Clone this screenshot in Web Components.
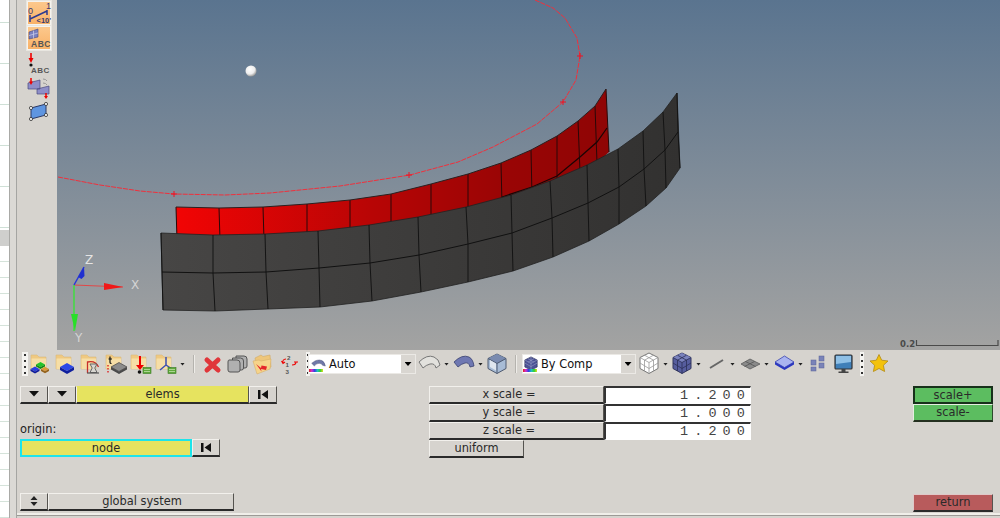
<!DOCTYPE html>
<html>
<head>
<meta charset="utf-8">
<style>
  html, body { margin: 0; padding: 0; height: 100%; overflow: hidden; background: #d6d3ce; }
  body { font: 11.4px "DejaVu Sans", sans-serif; color: #222; }
</style>
</head>
<body>
<hm-app></hm-app>

<script>
// folder shared by most of the toolbar icons
const FOLDER = `<path d="M1 3h6l2 2h7v12H1z" fill="#efc981" stroke="#d8b97e" stroke-width=".6"/><path d="M1.500 6.500H16V17H1.500z" fill="#f6dea6"/>`;
const TAG = `<rect x="13" y="15.500" width="8" height="6" fill="#5fa83c" stroke="#3a7a22" stroke-width=".6"/><path d="M14 17.500h6M14 19.500h6" stroke="#cde6b8" stroke-width=".7"/>`;

const ICONS = {
  blocks: `${FOLDER}<path d="M6 12.500l4.500-2.500 4.500 2.500-4.500 2.500z" fill="#22c42a"/><path d="M6 12.500v2l4.500 2.500 4.500-2.500v-2l-4.500 2.500z" fill="#0f8a18"/>
    <path d="M.5 17l4.500-2.500L9.500 17 5 19.500z" fill="#2a3fe0"/><path d="M.5 17v2L5 21.500 9.500 19v-2L5 19.500z" fill="#101c9a"/>
    <path d="M11 17l4-2.300 4 2.300-4 2.300z" fill="#d99a3a"/><path d="M11 17v2l4 2.300 4-2.300v-2l-4 2.300z" fill="#94621c"/>`,
  slab: `${FOLDER}<path d="M5 15l7-4 7 4-7 4z" fill="#2c49e8"/><path d="M5 15v3l7 4 7-4v-3l-7 4z" fill="#101f9e"/>`,
  arc: `${FOLDER}<path d="M7.500 21V10q8-2 11 5" fill="none" stroke="#c8302a" stroke-width="1.300"/>
    <path d="M10 12h7l-2.200 4 2.200 4.500h-7l2.200-4.500z" fill="#d8d6d0" stroke="#666" stroke-width="1"/><path d="M7 21h12" stroke="#555" stroke-width="1.200"/>`,
  tslab: `${FOLDER}<path d="M3.500 7h3.500M5 4.500v6q0 1 1.500 1" fill="none" stroke="#111" stroke-width="1.200"/><path d="M3 13v1.500M3 16v1.500M3 19v1.500" stroke="#d22" stroke-width="1.400"/>
    <path d="M6 15l8-4.500 8 4.500-8 4.500z" fill="#8c8c8c" stroke="#444" stroke-width=".7"/><path d="M6 15v2.500l8 4.500 8-4.500V15l-8 4.500z" fill="#4a4a4a"/>`,
  down: `${FOLDER}<path d="M10 4v10" stroke="#e00" stroke-width="2"/><path d="M6 13h8l-4 5z" fill="#e00"/><circle cx="9.500" cy="20" r="1.800" fill="#111"/>${TAG}`,
  axes: `${FOLDER}<path d="M11 5v8l-6 5M11 13l6 4" fill="none" stroke="#3d4fb0" stroke-width="1.500"/>${TAG}`,
  cross: `<path d="M3 8l11 10M14 8L3 18" stroke="#e0363a" stroke-width="5" stroke-linecap="round"/>`,
  stack: `<g fill="#b0b0b0" stroke="#555" stroke-width="1" transform="translate(0 1)"><path d="M9 3h8q3 0 3 3v7q0 2-2 2h-9z"/><path d="M5.500 5h8q3 0 3 3v7q0 2-2 2h-9z"/><path d="M2 7h8q3 0 3 3v7q0 2-2 2H3q-2 0-2-2v-8q0-2 1-2z"/></g>`,
  folderback: `<path d="M3 6l6-3 2 1.500 7-1.500 1 12-14 4z" fill="#eec67a" stroke="#cfa968" stroke-width=".6"/><path d="M1 9l6-1 2 1 10-2-1 10-13 5z" fill="#f6d48a" stroke="#d6b06c" stroke-width=".6"/><path d="M4 12l5 4 .5-2.500 5.500 1-1 3.500-5-1 .5 2.500z" fill="#e5262a"/>`,
  renum: `<g font-family="Liberation Sans, sans-serif" font-weight="700" font-size="6.200" fill="#555"><text x="7" y="8">2</text><text x="5.500" y="15.200">1</text><text x="5.500" y="22.400">3</text></g>
    <path d="M6 7Q2 7.500 3 11M1.500 9l1.500 2.500L5 10M12 13q4 0 4-3M14 10h4" stroke="#e00" stroke-width="1.100" fill="none"/>`,
  surfauto: `<path d="M1 8q8-7 15-4 4 2 5 8l-4-1q-1-3-5-3-5 0-7 4z" fill="#6f78a8" stroke="#3f466e" stroke-width=".6"/>`,
  surfwire: `<path d="M1 10q8-8 15-5 5 2 6 8l-4 3q-1-5-6-4-4 1-7 4z" fill="#e2e1dd" stroke="#777" stroke-width="1"/>`,
  surfsolid: `<path d="M1 10q8-8 15-5 4 2 5 9l-4 1q-1-5-5-4-4 1-7 4z" fill="#6f78b2" stroke="#384070" stroke-width=".8"/>`,
  box: `<path d="M10 2l9 4.500v10l-9 5-9-5v-10z" fill="#a8bcd6" stroke="#4e5a70" stroke-width="1"/><path d="M10 2l9 4.500-9 5-9-5z" fill="#7a8bb0"/><path d="M10 11.500v10M1 6.500l9 5 9-5" fill="none" stroke="#4e5a70" stroke-width="1"/><path d="M3 8l6 3.500v7L3 15z" fill="#dfe6ee"/>`,
  bycomp: `<path d="M8 1l7 3.500v8L8 16l-7-3.500v-8z" fill="#4b5294" stroke="#2a2e58" stroke-width=".7"/><path d="M8 1v15M1 8l7 4 7-4M1 4.500l7 4 7-4M4.500 3l7 4M11.500 3l-7 4" stroke="#a0a6cc" stroke-width=".6" fill="none"/>`,
  cubewire: `<path d="M10 1l9 4.500v11l-9 5-9-5v-11z" fill="#fff" stroke="#777" stroke-width="1"/><path d="M1 5.500l9 5 9-5M10 10.500v11M5.500 3.200l9 5M14.500 3.200l-9 5M1 11l9 5.500L19 11M5.500 8v11M14.500 8v11" fill="none" stroke="#999" stroke-width=".8"/>`,
  cubesolid: `<path d="M10 1l9 4.500v11l-9 5-9-5v-11z" fill="#565d9e" stroke="#32365e" stroke-width="1"/><path d="M10 1l9 4.500-9 5-9-5z" fill="#7a82bd"/><path d="M1 5.500l9 5 9-5M10 10.500v11M5.500 3.200l9 5M14.500 3.200l-9 5M1 11l9 5.500L19 11M5.500 8v11M14.500 8v11" fill="none" stroke="#2c3058" stroke-width=".8"/>`,
  line: `<path d="M1 16L14 8" stroke="#666" stroke-width="2"/>`,
  plane: `<path d="M1 12l9-5 10 5-10 5z" fill="#8a8a8a" stroke="#5c5c5c" stroke-width=".8"/><path d="M5.500 9.500l10 5M14.500 9.500l-10 5" stroke="#555" stroke-width=".8"/>`,
  plate: `<path d="M1 10l9.500-6 9.500 6-9.500 5.500z" fill="#aab4f0" stroke="#3a44b0" stroke-width=".8"/><path d="M1 10v2.500l9.500 5.500 9.500-5.500V10l-9.500 5.500z" fill="#2c38c0"/>`,
  squares: `<g fill="#7a83b8" stroke="#5a6296" stroke-width=".5"><rect x="10" y="4" width="5" height="5"/><rect x="10" y="11" width="5" height="5"/><rect x="2" y="8" width="5" height="5"/><rect x="2" y="15" width="5" height="4"/></g>`,
  monitor: `<rect x="1" y="3" width="17" height="14" rx="1" fill="#3f7fb8" stroke="#333" stroke-width="1.200"/><path d="M2 4h15v6L2 12z" fill="#8fc0e6"/><path d="M7.500 17h4v2.500h3v1.500h-10v-1.500h3z" fill="#444"/>`,
  star: `<path d="M10 2.500l2.700 5.700 6.300.8-4.600 4.300 1.200 6.200L10 16.500l-5.600 3 1.200-6.200L1 9l6.300-.8z" fill="#f3c20c" stroke="#b48a10" stroke-width=".8"/>`,
  ramp: `<g font-family="Liberation Sans, sans-serif" font-size="9" fill="#3a3a70"><text x="0" y="12">0</text><text x="18" y="7">1</text><text x="8.500" y="20.500" font-weight="700" font-size="7.500">&lt;10'</text></g><path d="M2 20v-7M2 17L19 9M19 13V8" stroke="#2c3a90" stroke-width="1.500" fill="none"/>`,
  gridabc: `<path d="M1 5l9-3v8l-9 2z" fill="#7a80c0" stroke="#444a80" stroke-width=".6"/><path d="M5.500 3.500v8M1 8.500l9-2.500" stroke="#cfd2ec" stroke-width=".7"/><text x="3" y="20" font-family="Liberation Sans, sans-serif" font-weight="700" font-size="8.500" fill="#555" letter-spacing=".5">ABC</text>`,
  downabc: `<path d="M3 2v8" stroke="#e00" stroke-width="1.600"/><path d="M.5 7h5L3 12z" fill="#e00"/><circle cx="3" cy="14" r="1.600" fill="#111"/><text x="3" y="21.500" font-family="Liberation Sans, sans-serif" font-weight="700" font-size="8" fill="#555" letter-spacing=".5">ABC</text>`,
  flip: `<path d="M0 7l12-3v9H0zM9 13l12-3v8H9z" fill="#8e8ec8" stroke="#4a4a80" stroke-width=".7"/><path d="M3 2v5" stroke="#e00" stroke-width="1.500"/><path d="M1 5.500h4L3 9z" fill="#e00"/><path d="M18 17v4" stroke="#e00" stroke-width="1.500"/><path d="M16 20h4l-2 3z" fill="#e00"/><path d="M15 3q3 0 4 2M15 7q3 0 4 2" stroke="#999" fill="none"/>`,
  quad: `<path d="M2 6l15-4v11L2 17z" fill="#5f95e0" stroke="#2c3a66" stroke-width="1"/><g fill="#f4f4f4" stroke="#333" stroke-width=".8"><circle cx="2" cy="6" r="1.600"/><circle cx="17" cy="2" r="1.600"/><circle cx="17" cy="13" r="1.600"/><circle cx="2" cy="17" r="1.600"/></g>`,
  tridown: `<path d="M0 0h10L5 5.500z" fill="#111"/>`,
  skip: `<path d="M0 0h2.500v9H0zM10 0v9L3.500 4.500z" fill="#111"/>`,
  updown: `<path d="M4 0l3.500 4h-7zM4 10L.5 6h7z" fill="#222"/>`
};

class HmIcon extends HTMLElement {
  constructor() {
    super();
    this.attachShadow({mode: 'open'});
  }
  connectedCallback() {
    const w = this.getAttribute('w') || 21;
    const h = this.getAttribute('h') || 24;
    const vb = this.getAttribute('vb') || `0 0 ${w} ${h}`;
    this.shadowRoot.innerHTML = `
      <style>:host { display: block; flex: none; width: ${w}px; height: ${h}px; } svg { display: block; overflow: visible; }</style>
      <svg width="${w}" height="${h}" viewBox="${vb}">${ICONS[this.getAttribute('name')]}</svg>`;
  }
}
customElements.define('hm-icon', HmIcon);

// spreadsheet edge peeking out on the far left
class SideStrip extends HTMLElement {
  constructor() {
    super();
    this.attachShadow({mode: 'open'}).innerHTML = `
      <style>
        :host { display: flex; flex: none; width: 17px; height: 100%; background: #dbd9d5; }
        .sheet { width: 9px; border-right: 1px solid #a9a9a6; display: flex; flex-direction: column; background: #fff; }
        .top { height: 230px; background: repeating-linear-gradient(#fff 0 22px, #cfe0d6 22px 23px, #fff 23px 41px); }
        .sel { height: 16px; background: #cfcfcd; }
        .rest { flex: 1; background: repeating-linear-gradient(#fff 0 15px, #d5e3da 15px 16px); }
        .edge { width: 6px; }
        .line { width: 1px; background: #a5a5a2; }
      </style>
      <div class="sheet"><div class="top"></div><div class="sel"></div><div class="rest"></div></div>
      <div class="edge"></div><div class="line"></div>`;
  }
}
customElements.define('side-strip', SideStrip);

class ToolBtn extends HTMLElement {
  constructor() {
    super();
    this.attachShadow({mode: 'open'}).innerHTML = `
      <style>
        :host { display: flex; align-items: center; justify-content: center; width: 24px; height: 24px; box-sizing: border-box; margin: 0 0 1px 10px; }
        :host([on]) { background: linear-gradient(#fcc88c, #f9b268); border: 1px solid #f5f3ee; box-shadow: 0 0 0 1px #e8e6e0; }
      </style><slot></slot>`;
  }
}
customElements.define('tool-btn', ToolBtn);

class LeftTools extends HTMLElement {
  constructor() {
    super();
    this.attachShadow({mode: 'open'}).innerHTML = `
      <style>
        :host { display: flex; flex-direction: column; flex: none; width: 40px; background: #d6d3ce; padding-top: 1px; box-sizing: border-box; height: 100%; }
      </style><slot></slot>`;
  }
}
customElements.define('left-tools', LeftTools);

// the model view, its points are measured off the picture
class ModelView extends HTMLElement {
  constructor() {
    super();
    this.attachShadow({mode: 'open'});
  }
  connectedCallback() {
    const redTop = [[176,207],[219,208],[263,207],[307,204],[350,200],[391,194],[431,184],[468,174],[501,163],[531,150],[557,136],[578,121],[595,106],[606,89]];
    const redMid = [[177,234],[220,235],[264,234],[307,231],[350,227],[391,222],[431,214],[468,206],[502,197],[532,187],[557,176],[580,157],[597,142],[607,128]];
    const redLow = [[177,240],[220,240],[264,240],[307,240],[350,235],[391,230],[431,222],[468,214],[502,205],[532,197],[557,186],[580,172],[597,163],[609,152]];
    const top = [[161,233],[213,235],[265,234],[318,231],[369,225],[418,217],[466,207],[511,195],[550,181],[587,165],[618,149],[643,131],[663,112],[677,93]];
    const mid = [[162,272],[213,273],[266,272],[319,268],[370,263],[419,255],[468,244],[512,233],[552,218],[588,203],[619,187],[644,169],[665,150],[678,132]];
    const low = [[163,310],[215,311],[268,309],[320,307],[372,301],[421,292],[468,282],[513,271],[553,257],[589,241],[619,224],[646,206],[666,188],[680,168]];
    const pts = a => a.map(p => p.join(',')).join(' ');
    const poly = (a, b) => pts(a) + ' ' + pts(b.slice().reverse());
    const ribs = (rows, stroke) => rows[0].map((_, i) => `<polyline points="${pts(rows.map(r => r[i]))}" fill="none" stroke="${stroke}"/>`).join('');
    const curve = [[58,177],[100,185],[140,191],[174,194],[225,195],[270,193],[340,186],[410,175],[458,162],[493,147],[537,124],[563,102],[576,80],[580,56],[577,38],[565,18],[553,8],[535,0]];
    const plus = p => `<path d="M${p[0]-3} ${p[1]}h6M${p[0]} ${p[1]-3}v6"/>`;
    this.shadowRoot.innerHTML = `
      <style>
        :host { display: block; position: relative; flex: 1; height: 100%; background: linear-gradient(#5a748f, #a3a3a2); }
        svg { display: block; position: absolute; left: 0; top: 0; }
        text { font-family: "DejaVu Sans", sans-serif; }
      </style>
      <svg width="943" height="350" viewBox="57 0 943 350">
        <defs>
          <linearGradient id="red" gradientUnits="userSpaceOnUse" x1="176" y1="0" x2="610" y2="0">
            <stop offset="0" stop-color="#f20404"/><stop offset=".45" stop-color="#b80505"/><stop offset=".75" stop-color="#9a0505"/><stop offset="1" stop-color="#8f0505"/>
          </linearGradient>
          <linearGradient id="dark" gradientUnits="userSpaceOnUse" x1="160" y1="0" x2="680" y2="0">
            <stop offset="0" stop-color="#474645"/><stop offset="1" stop-color="#323130"/>
          </linearGradient>
          <radialGradient id="ball" cx=".4" cy=".35" r=".7"><stop offset="0" stop-color="#fff"/><stop offset=".6" stop-color="#eee"/><stop offset="1" stop-color="#8a8a88"/></radialGradient>
        </defs>
        <polygon points="${poly(redTop, redLow)}" fill="url(#red)"/>
        ${ribs([redTop, redLow], '#2a0808')}
        <polyline points="${pts(redTop)}" fill="none" stroke="#2a2020"/>
        <polyline points="${pts(redMid.slice(8))}" fill="none" stroke="#1a0505" stroke-width="1.200"/>
        <polygon points="${poly(top, low)}" fill="url(#dark)" stroke="#222" stroke-width=".8"/>
        ${ribs([top, mid, low], '#141414')}
        <polyline points="${pts(mid)}" fill="none" stroke="#111"/>
        <polyline points="${pts(curve)}" fill="none" stroke="#f0303c" stroke-width="1" stroke-dasharray="5 1"/>
        <g stroke="#f01020" fill="none">${plus([174,194])}${plus([409,175])}${plus([563,102])}${plus([580,56])}</g>
        <circle cx="251" cy="71" r="5.500" fill="url(#ball)"/>
        <path d="M74 285L123 287" stroke="#e04848" stroke-width="1.200"/>
        <path d="M104 283l19 4-19 3z" fill="#f01818"/>
        <path d="M74 285V331" stroke="#40dc40" stroke-width="1.500"/>
        <path d="M71 314h7l-3 17z" fill="#28e028"/>
        <path d="M74 285L84 267" stroke="#2838d8" stroke-width="1.500"/>
        <path d="M78 277l6-10 .5 9-3 3z" fill="#2030d0"/>
        <text x="131" y="289" font-size="12" fill="#d4d4d4">X</text>
        <text x="75" y="342" font-size="12" fill="#d4d4d4">Y</text>
        <text x="85" y="264" font-size="12" fill="#e4e4e4">Z</text>
        <text x="900" y="347" font-size="8.500" font-weight="700" fill="#4a4a4a">0.2</text>
        <path d="M916.500 340v5.500H998V340" fill="none" stroke="#4a4a4a" stroke-width="1.200"/>
      </svg>`;
  }
}
customElements.define('model-view', ModelView);

class ToolGrip extends HTMLElement {
  constructor() {
    super();
    this.attachShadow({mode: 'open'}).innerHTML = `
      <style>
        :host { display: block; flex: none; width: 6px; height: 24px; background: #f4f3f0 radial-gradient(circle at 50% 50%, #333 0 1.200px, transparent 1.500px) 0 0 / 100% 6px; }
      </style>`;
  }
}
customElements.define('tool-grip', ToolGrip);

class ToolCombo extends HTMLElement {
  constructor() {
    super();
    this.attachShadow({mode: 'open'}).innerHTML = `
      <style>
        :host { display: flex; align-items: center; flex: none; height: 20px; background: #fff; box-sizing: border-box; border: 1px solid #ebe9e5; font-size: 11.400px; color: #111; }
        .label { flex: 1; display: flex; align-items: center; white-space: nowrap; overflow: hidden; }
        .arrow { width: 14px; height: 100%; background: #d9d6d1; display: flex; align-items: center; justify-content: center; }
        .arrow i { display: block; width: 7px; height: 4px; background: #000; clip-path: polygon(0 0, 100% 0, 50% 100%); }
        .ramp { display: block; width: 14px; height: 3px; background: linear-gradient(90deg, #e02020, #d030d0, #3040e0, #20c0c0, #30d030, #e0e020); margin: -2px 0 0 0; }
        .ico { display: flex; flex-direction: column; margin-right: var(--gap, 3px); }
      </style>
      <div class="label"><span class="ico"><slot name="icon"></slot><span class="ramp"></span></span><slot></slot></div>
      <div class="arrow"><i></i></div>`;
  }
}
customElements.define('tool-combo', ToolCombo);

class TinyArrow extends HTMLElement {
  constructor() {
    super();
    this.attachShadow({mode: 'open'}).innerHTML = `
      <style>
        :host { display: block; flex: none; width: 5px; height: 3px; background: #222; clip-path: polygon(0 0, 100% 0, 50% 100%); }
      </style>`;
  }
}
customElements.define('tiny-arrow', TinyArrow);

class ToolSep extends HTMLElement {
  constructor() {
    super();
    this.attachShadow({mode: 'open'}).innerHTML = `
      <style>:host { display: block; flex: none; width: 1px; height: 18px; background: #b5b3ae; border-right: 1px solid #eeece8; }</style>`;
  }
}
customElements.define('tool-sep', ToolSep);

class MainToolbar extends HTMLElement {
  constructor() {
    super();
    this.attachShadow({mode: 'open'}).innerHTML = `
      <style>
        :host { display: flex; align-items: center; height: 28px; padding-left: 5px; flex: none; }
      </style><slot></slot>`;
  }
}
customElements.define('main-toolbar', MainToolbar);

class PanelBtn extends HTMLElement {
  constructor() {
    super();
    this.attachShadow({mode: 'open'}).innerHTML = `
      <style>
        :host { display: flex; align-items: center; justify-content: center; box-sizing: border-box; height: 18px; flex: none; width: var(--w, 28px);
          background: #d6d3ce; color: #2a2a2a; font-size: 11.400px; white-space: nowrap; padding-right: var(--pr, 0); padding-left: var(--pl, 0);
          border-top: 1px solid #f2f0ec; border-left: 1px solid #f2f0ec; border-bottom: 2px solid #2a2a2a; border-right: 1px solid #55534f; padding-bottom: 1px; }
        :host([kind=yellow]) { background: #e6e35f; border-top-color: #e6e35f; }
        :host([kind=cyan]) { background: #e6e35f; border: 2px solid #1de4ea; }
        :host([kind=green]) { background: #5cbd60; border-color: #e4efe0 #2c4a2c #24301f #e4efe0; }
        :host([kind=focus]) { background: #5cbd60; border: 2px solid #17301a; }
        :host([kind=red]) { background: #b85b5c; border-top-color: #e0c8c8; border-left-color: #e0c8c8; }
      </style><slot></slot>`;
  }
}
customElements.define('panel-btn', PanelBtn);

class NumberField extends HTMLElement {
  constructor() {
    super();
    this.attachShadow({mode: 'open'}).innerHTML = `
      <style>
        :host { display: flex; align-items: center; justify-content: flex-end; box-sizing: border-box; width: 147px; height: 18px; flex: none;
          background: #fff; border: 2px solid #fff; border-top-color: #333; border-left-color: #333; border-bottom-width: 1px; border-right-width: 1px;
          font: 13.500px "Liberation Mono", monospace; color: #444; letter-spacing: 6.100px; white-space: nowrap; }
        span { margin-right: -1px; }
      </style><span><slot></slot></span>`;
  }
}
customElements.define('number-field', NumberField);

class BtnRow extends HTMLElement {
  constructor() {
    super();
    this.attachShadow({mode: 'open'}).innerHTML = `
      <style>:host { display: flex; height: 18px; flex: none; margin-top: var(--mt, 0); } :host([label]) { height: auto; font-size: 11.400px; color: #222; }</style><slot></slot>`;
  }
}
customElements.define('btn-row', BtnRow);

class FormPanel extends HTMLElement {
  constructor() {
    super();
    this.attachShadow({mode: 'open'}).innerHTML = `
      <style>
        :host { display: flex; flex: 1; padding: 8px 7px 0 3px; box-sizing: border-box; border-bottom: 2px solid #f0eee9; box-shadow: 0 1px 0 #9c9a96; margin-bottom: 3px; }
        .col { display: flex; flex-direction: column; flex: none; }
        .left { width: 409px; }
        .mid { width: 484px; }
        .right { width: 80px; }
      </style>
      <div class="col left"><slot name="left"></slot></div>
      <div class="col mid"><slot name="mid"></slot></div>
      <div class="col right"><slot name="right"></slot></div>`;
  }
}
customElements.define('form-panel', FormPanel);

class HmApp extends HTMLElement {
  constructor() {
    super();
    this.attachShadow({mode: 'open'}).innerHTML = `
      <style>
        :host { display: flex; width: 1000px; height: 518px; overflow: hidden; }
        .main { flex: 1; display: flex; flex-direction: column; min-width: 0; }
        .top { display: flex; height: 350px; flex: none; }
      </style>
      <side-strip></side-strip>
      <div class="main">
        <div class="top">
          <left-tools>
            <tool-btn on><hm-icon name="ramp" w="22" h="22"></hm-icon></tool-btn>
            <tool-btn on><hm-icon name="gridabc" w="22" h="22"></hm-icon></tool-btn>
            <tool-btn><hm-icon name="downabc" w="22" h="24"></hm-icon></tool-btn>
            <tool-btn><hm-icon name="flip" w="22" h="24"></hm-icon></tool-btn>
            <tool-btn><hm-icon name="quad" w="20" h="22"></hm-icon></tool-btn>
          </left-tools>
          <model-view></model-view>
        </div>
        <main-toolbar>
          <tool-grip></tool-grip>
          <hm-icon name="blocks" style="margin-left:2px"></hm-icon>
          <hm-icon name="slab" style="margin-left:4px"></hm-icon>
          <hm-icon name="arc" style="margin-left:4px"></hm-icon>
          <hm-icon name="tslab" style="margin-left:4px"></hm-icon>
          <hm-icon name="down" style="margin-left:4px"></hm-icon>
          <hm-icon name="axes" style="margin-left:4px"></hm-icon>
          <tiny-arrow style="margin-left:4px"></tiny-arrow>
          <tool-sep style="margin-left:8px"></tool-sep>
          <hm-icon name="cross" style="margin-left:9px"></hm-icon>
          <hm-icon name="stack" style="margin-left:2px"></hm-icon>
          <hm-icon name="folderback" style="margin-left:4px"></hm-icon>
          <hm-icon name="renum" style="margin-left:7px"></hm-icon>
          <tool-grip style="margin-left:5px;width:4px"></tool-grip>
          <tool-combo style="width:108px;margin-left:-2px">
            <hm-icon slot="icon" name="surfauto" w="15" h="14" vb="0 0 22 18" style="margin-left:2px"></hm-icon>Auto
          </tool-combo>
          <hm-icon name="surfwire" w="22" style="margin-left:2px"></hm-icon>
          <tiny-arrow style="margin-left:4px"></tiny-arrow>
          <hm-icon name="surfsolid" w="21" style="margin-left:4px"></hm-icon>
          <tiny-arrow style="margin-left:4px"></tiny-arrow>
          <hm-icon name="box" w="20" style="margin-left:4px"></hm-icon>
          <tool-sep style="margin-left:8px"></tool-sep>
          <tool-combo style="width:114px;margin-left:5px;--gap:2px">
            <hm-icon slot="icon" name="bycomp" w="16" h="15" vb="0 0 16 17"></hm-icon>By Comp
          </tool-combo>
          <hm-icon name="cubewire" w="20" style="margin-left:3px"></hm-icon>
          <tiny-arrow style="margin-left:4px"></tiny-arrow>
          <hm-icon name="cubesolid" w="20" style="margin-left:4px"></hm-icon>
          <tiny-arrow style="margin-left:4px"></tiny-arrow>
          <hm-icon name="line" w="15" style="margin-left:8px"></hm-icon>
          <tiny-arrow style="margin-left:6px"></tiny-arrow>
          <hm-icon name="plane" w="20" style="margin-left:5px"></hm-icon>
          <tiny-arrow style="margin-left:4px"></tiny-arrow>
          <hm-icon name="plate" w="20" style="margin-left:5px"></hm-icon>
          <tiny-arrow style="margin-left:4px"></tiny-arrow>
          <hm-icon name="squares" w="17" style="margin-left:6px"></hm-icon>
          <hm-icon name="monitor" w="20" style="margin-left:8px"></hm-icon>
          <tool-grip style="margin-left:6px;width:4px"></tool-grip>
          <hm-icon name="star" w="20" style="margin-left:5px"></hm-icon>
        </main-toolbar>
        <form-panel>
          <btn-row slot="left">
            <panel-btn><hm-icon name="tridown" w="10" h="6"></hm-icon></panel-btn>
            <panel-btn><hm-icon name="tridown" w="10" h="6"></hm-icon></panel-btn>
            <panel-btn kind="yellow" style="--w:173px">elems</panel-btn>
            <panel-btn><hm-icon name="skip" w="10" h="9"></hm-icon></panel-btn>
          </btn-row>
          <btn-row slot="left" label style="--mt:18px">origin:</btn-row>
          <btn-row slot="left" style="--mt:3px">
            <panel-btn kind="cyan" style="--w:172px">node</panel-btn>
            <panel-btn><hm-icon name="skip" w="10" h="9"></hm-icon></panel-btn>
          </btn-row>
          <btn-row slot="left" style="--mt:36px">
            <panel-btn><hm-icon name="updown" w="8" h="10"></hm-icon></panel-btn>
            <panel-btn style="--w:186px;--pl:2px">global system</panel-btn>
          </btn-row>

          <btn-row slot="mid"><panel-btn style="--w:175px;--pr:15px">x scale =</panel-btn><number-field>1.200</number-field></btn-row>
          <btn-row slot="mid"><panel-btn style="--w:175px;--pr:15px">y scale =</panel-btn><number-field>1.000</number-field></btn-row>
          <btn-row slot="mid"><panel-btn style="--w:175px;--pr:15px">z scale =</panel-btn><number-field>1.200</number-field></btn-row>
          <btn-row slot="mid"><panel-btn style="--w:95px">uniform</panel-btn></btn-row>

          <btn-row slot="right"><panel-btn kind="focus" style="--w:80px">scale+</panel-btn></btn-row>
          <btn-row slot="right"><panel-btn kind="green" style="--w:80px">scale-</panel-btn></btn-row>
          <btn-row slot="right" style="--mt:72px"><panel-btn kind="red" style="--w:80px">return</panel-btn></btn-row>
        </form-panel>
      </div>`;
  }
}
customElements.define('hm-app', HmApp);
</script>
</body>
</html>
